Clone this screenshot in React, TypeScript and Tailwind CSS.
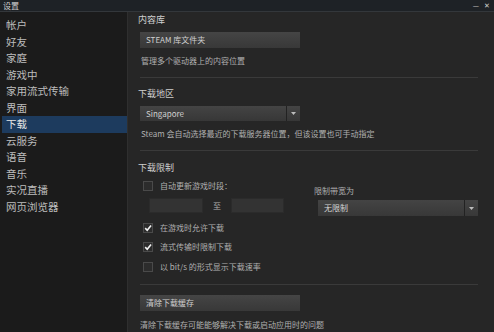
import React from 'react';

const navItems = ['帐户', '好友', '家庭', '游戏中', '家用流式传输', '界面', '下载', '云服务', '语音', '音乐', '实况直播', '网页浏览器'];

const Check = ({checked}: {checked: boolean}) => (
  <div className="w-[10px] h-[10px] border border-[#4a4a4a] bg-[#2c2c2c] flex items-center justify-center shrink-0">
    {checked && (
      <svg width="10" height="10" viewBox="0 0 10 10">
        <path d="M1.5 5.2 L4 7.8 L8.8 1.8" stroke="#f2f2f2" strokeWidth="2" fill="none" />
      </svg>
    )}
  </div>
);

const Arrow = () => (
  <div className="w-[14px] h-full border-l border-[#222] flex items-center justify-center">
    <svg width="5" height="3" viewBox="0 0 5 3">
      <path d="M0 0 L5 0 L2.5 3 Z" fill="#bdbdbd" />
    </svg>
  </div>
);

const Divider = ({mt}: {mt: string}) => (
  <div className={`${mt} h-px w-[338px] bg-[#3a3a3a]`} />
);

const App = () => {
  return (
    <div
      className="w-[494px] h-[332px] overflow-hidden flex flex-col bg-[#262626] text-[#c4c4c4]"
      style={{fontFamily: '"Noto Sans CJK SC", "Noto Sans", sans-serif'}}
    >
      <div className="h-[12px] shrink-0 bg-[#1e2226] flex justify-between items-center border-b border-[#33373b]">
        <span className="ml-[3px] text-[8px] leading-[11px] text-[#d0d0d0]">设置</span>
        <span className="mr-[4px] text-[7px] leading-[11px] text-[#cfcfcf] flex gap-[5px]">
          <span>—</span>
          <span>✕</span>
        </span>
      </div>

      <div className="flex flex-1 min-h-0">
        <div className="w-[128px] shrink-0 bg-[#1b1b1b] border-r border-[#2f2f2f] pt-[5px] pl-[2px]">
          {navItems.map((item) => (
            <div
              key={item}
              className={`h-[16.5px] flex items-center pl-[4px] text-[10.5px] ${
                item === '下载' ? 'bg-[#1d3b5e] text-[#e6e6e6]' : 'text-[#bdbdbd]'
              }`}
            >
              {item}
            </div>
          ))}
        </div>

        <div className="flex-1 pl-[10px] flex flex-col text-[8px] leading-[12px] text-[#b0b0b0]">
          <div className="mt-[1px] h-[14px] leading-[14px] text-[9px] text-[#cfcfcf]">内容库</div>
          <div className="mt-[5px] ml-[2px] w-[160px] h-[16px] bg-gradient-to-b from-[#454545] to-[#383838] flex items-center pl-[6px] text-[#d0d0d0]">
            STEAM 库文件夹
          </div>
          <div className="mt-[7px] ml-[3px] h-[12px]">管理多个驱动器上的内容位置</div>
          <Divider mt="mt-[10px] ml-[2px]" />

          <div className="mt-[9px] h-[14px] leading-[14px] text-[9px] text-[#cfcfcf]">下载地区</div>
          <div className="mt-[5px] ml-[2px] w-[160px] h-[15px] bg-gradient-to-b from-[#444] to-[#373737] flex items-center">
            <span className="flex-1 pl-[6px] text-[#cfcfcf]">Singapore</span>
            <Arrow />
          </div>
          <div className="mt-[7px] ml-[3px] h-[12px]">Steam 会自动选择最近的下载服务器位置，但该设置也可手动指定</div>
          <Divider mt="mt-[10px] ml-[2px]" />

          <div className="mt-[10px] h-[14px] leading-[14px] text-[9px] text-[#cfcfcf]">下载限制</div>
          <div className="flex">
            <div className="w-[176px]">
              <div className="mt-[5px] ml-[5px] h-[12px] flex items-center gap-[7px]">
                <Check checked={false} />
                <span>自动更新游戏时段：</span>
              </div>
              <div className="mt-[6px] ml-[11px] flex items-center h-[15px]">
                <div className="w-[54px] h-[15px] bg-[#333] border border-[#2b2b2b]" />
                <span className="w-[28px] text-center">至</span>
                <div className="w-[53px] h-[15px] bg-[#333] border border-[#2b2b2b]" />
              </div>
            </div>
            <div className="flex flex-col">
              <div className="mt-[10px] h-[12px]">限制带宽为</div>
              <div className="mt-[3px] ml-[4px] w-[160px] h-[16px] bg-gradient-to-b from-[#444] to-[#383838] flex items-center">
                <span className="flex-1 pl-[6px] text-[#d4d4d4]">无限制</span>
                <Arrow />
              </div>
            </div>
          </div>

          <div className="mt-[6px] ml-[5px] h-[12px] flex items-center gap-[7px]">
            <Check checked />
            <span>在游戏时允许下载</span>
          </div>
          <div className="mt-[7px] ml-[5px] h-[12px] flex items-center gap-[7px]">
            <Check checked />
            <span>流式传输时限制下载</span>
          </div>
          <div className="mt-[8px] ml-[5px] h-[12px] flex items-center gap-[7px]">
            <Check checked={false} />
            <span>以 bit/s 的形式显示下载速率</span>
          </div>
          <Divider mt="mt-[11px] ml-[2px]" />

          <div className="mt-[10px] ml-[2px] w-[160px] h-[16px] bg-gradient-to-b from-[#454545] to-[#383838] flex items-center pl-[6px] text-[#d0d0d0]">
            清除下载缓存
          </div>
          <div className="mt-[8px] ml-[2px] h-[12px]">清除下载缓存可能能够解决下载或启动应用时的问题</div>
        </div>
      </div>
    </div>
  );
};

export default App;
